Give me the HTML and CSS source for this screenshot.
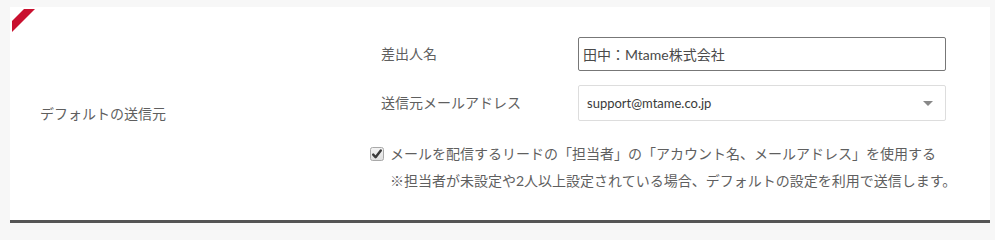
FILE: index.html
```html
<!DOCTYPE html>
<html lang="ja">
<head>
<meta charset="utf-8">
<title>デフォルトの送信元</title>
<link rel="stylesheet" href="styles.css">
</head>
<body>
<div class="card">
  <svg class="ribbon" width="30" height="30" viewBox="0 0 30 30" aria-hidden="true">
    <polygon points="14,2 25,2 2,25 2,14" fill="#c9102f"/>
  </svg>
  <div class="row">
    <div class="row-label">デフォルトの送信元</div>
    <div class="row-body">
      <div class="field">
        <label class="field-label" for="sender">差出人名</label>
        <input class="text-input" id="sender" type="text" value="田中：Mtame株式会社">
      </div>
      <div class="field field-second">
        <span class="field-label">送信元メールアドレス</span>
        <div class="select">
          <span class="select-value">support@mtame.co.jp</span>
          <span class="caret"></span>
        </div>
      </div>
      <div class="check">
        <svg class="check-box" width="14" height="14" viewBox="0 0 14 14" aria-hidden="true">
          <defs>
            <linearGradient id="cb" x1="0" y1="0" x2="0" y2="1">
              <stop offset="0" stop-color="#f4f4f4"/>
              <stop offset="1" stop-color="#dedede"/>
            </linearGradient>
          </defs>
          <rect x="0.5" y="0.5" width="13" height="13" rx="2" fill="url(#cb)" stroke="#a9a9a9"/>
          <path d="M3.2 7.6 L5.6 10.2 L10.8 3.4" fill="none" stroke="#3a3a3a" stroke-width="2.4" stroke-linecap="round" stroke-linejoin="round"/>
        </svg>
        <span class="check-text">メールを配信するリードの「担当者」の「アカウント名、メールアドレス」を使用する</span>
      </div>
      <p class="note">※担当者が未設定や2人以上設定されている場合、デフォルトの設定を利用で送信します。</p>
    </div>
  </div>
</div>
</body>
</html>
```
FILE: styles.css
```css
html, body {
  margin: 0;
  padding: 0;
}
body {
  background: #f7f7f7;
  font-family: Lato, "Noto Sans CJK JP", sans-serif;
  color: #5f5f5f;
  font-size: 14px;
}
.card {
  position: relative;
  margin: 7px 5px 0 10px;
  height: 213px;
  background: #fff;
  border-bottom: 3px solid #555;
}
.ribbon {
  position: absolute;
  left: 0;
  top: 0;
}
.row {
  display: grid;
  grid-template-columns: 360px 1fr;
  height: 100%;
}
.row-label {
  display: flex;
  align-items: center;
  padding-left: 30px;
  line-height: 20px;
}
.row-body {
  padding-top: 30px;
}
.field {
  display: flex;
  align-items: center;
  padding-left: 11px;
}
.field-second {
  margin-top: 14px;
}
.field-label {
  width: 197px;
  flex: none;
  line-height: 20px;
}
.text-input {
  box-sizing: border-box;
  width: 368px;
  height: 34px;
  margin: 0;
  padding: 0 4px;
  border: 1px solid #777;
  border-radius: 2px;
  font-family: Lato, "Noto Sans CJK JP", sans-serif;
  font-size: 14px;
  color: #4a4a4a;
  background: #fff;
  outline: none;
}
.select {
  box-sizing: border-box;
  width: 368px;
  height: 36px;
  display: flex;
  align-items: center;
  justify-content: space-between;
  padding: 0 12px 0 8px;
  border: 1px solid #ddd;
  border-radius: 2px;
  background: #fff;
}
.select-value {
  font-size: 13px;
  color: #3a3a3a;
}
.caret {
  width: 0;
  height: 0;
  border-left: 5px solid transparent;
  border-right: 5px solid transparent;
  border-top: 5px solid #888;
}
.check {
  display: flex;
  align-items: center;
  margin-top: 23px;
  line-height: 20px;
}
.check-box {
  flex: none;
  margin-right: 6px;
}
.note {
  margin: 7px 0 0 20px;
  line-height: 20px;
}
```
